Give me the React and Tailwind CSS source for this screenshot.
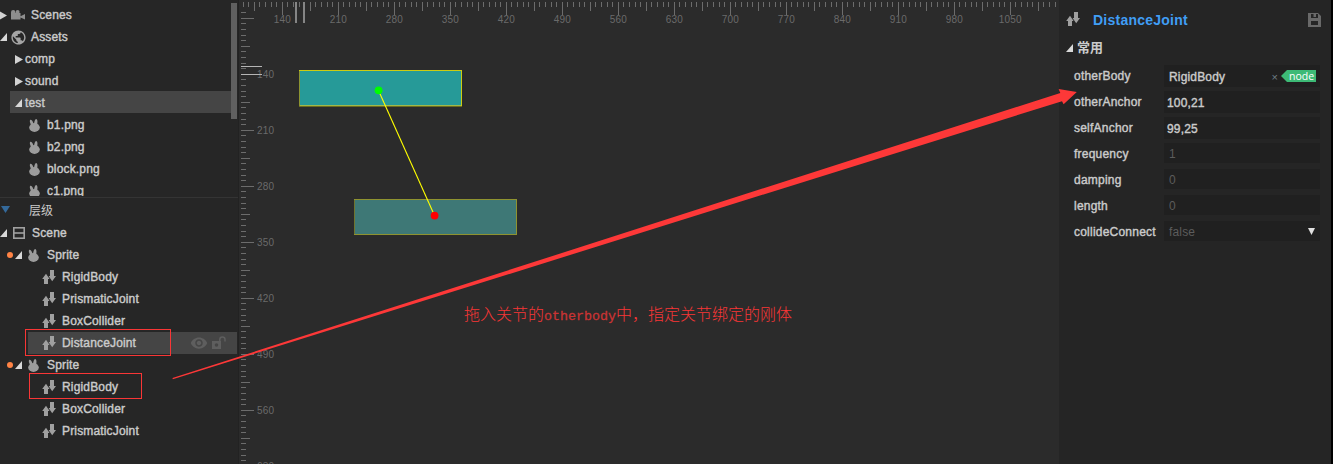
import React from "react";
import { MdPublic, MdVisibility } from "react-icons/md";

const Closed = ({ className = "" }) => (
  <svg className={`h-[9px] w-[8px] shrink-0 ${className}`} viewBox="0 0 8 9"><path d="M0 0L8 4.5L0 9Z" fill="#d2d2d2" /></svg>
);
const Open = ({ className = "" }) => (
  <svg className={`h-[8px] w-[7px] shrink-0 ${className}`} viewBox="0 0 7 8"><path d="M7 0V8H0Z" fill="#d8d8d8" /></svg>
);
const Camera = () => (
  <svg className="h-[10px] w-[14px] shrink-0" viewBox="0 0 14 10" fill="#8e8e8e">
    <circle cx="2.2" cy="2.2" r="2.2" /><circle cx="6.6" cy="2" r="2" />
    <path d="M0 3H9.5V6.2L14 4V9.5L9.5 7.6V9.6H0Z" />
  </svg>
);
const Rabbit = ({ className = "" }) => (
  <svg className={`h-[13px] w-[11px] shrink-0 ${className}`} viewBox="0 0 11 13" fill="#9c9c9c">
    <ellipse cx="5.5" cy="8.5" rx="5.3" ry="4.4" />
    <path d="M1.1 0.8C2.6 0.5 4.2 2.5 4.6 5.5L2.4 6.4C1 4.5 0.4 2.2 1.1 0.8Z" />
    <path d="M7.2 0.1C8.6 0.4 8.8 3.2 8 6L5 5.6C5 3.2 5.9 0.3 7.2 0.1Z" />
  </svg>
);
const Swap = ({ className = "" }) => (
  <svg className={`h-[14px] w-[14px] shrink-0 ${className}`} viewBox="0 0 14 14" fill="#a0a0a0">
    <path d="M4 3.8L7.6 9H6V14H2V9H0.2Z" />
    <path d="M8 0H12V6H14L10.2 11.2L6.6 6H8Z" />
  </svg>
);
const SceneIcon = () => (
  <svg className="h-[12px] w-[12px] shrink-0" viewBox="0 0 12 12" fill="none" stroke="#a0a0a0" strokeWidth="1.6">
    <rect x="0.8" y="0.8" width="10.4" height="10.4" /><path d="M1 6H11" />
  </svg>
);
const Unlock = () => (
  <svg className="h-[13px] w-[14px] shrink-0" viewBox="0 0 14 13">
    <path fillRule="evenodd" fill="#5e5e5e" d="M0 5H9V13H0ZM4.5 7.2A1.8 1.8 0 1 0 4.5 10.8A1.8 1.8 0 1 0 4.5 7.2Z" />
    <path d="M7.8 5V3.4A2.6 2.4 0 0 1 13 3.4V5.5" fill="none" stroke="#5e5e5e" strokeWidth="1.5" />
  </svg>
);
const Save = () => (
  <svg className="h-[14px] w-[13px] shrink-0" viewBox="0 0 13 14">
    <path fillRule="evenodd" fill="#696969" d="M0 0H10L13 3V14H0ZM3 1V5H10V1H8V4H5.5V1ZM3 8V12H10V8Z" />
  </svg>
);

const Dot = () => <span className="ml-[7px] mr-[2px] h-[6px] w-[6px] shrink-0 rounded-full bg-[#ff8345]" />;

const Row = ({ children }) => <div className="flex h-[22px] shrink-0 items-center">{children}</div>;

const Folder = ({ name }) => (
  <Row><Closed className="ml-[15px] mr-[2px]" /><span>{name}</span></Row>
);
const File = ({ name }) => (
  <Row><Rabbit className="ml-[29px] mr-[7px]" /><span>{name}</span></Row>
);
const Sprite = () => (
  <Row><Dot /><Open className="mr-[6px]" /><Rabbit className="mr-[8px]" /><span>Sprite</span></Row>
);
const Comp = ({ name }) => (
  <Row><Swap className="ml-[42px] mr-[6px]" /><span>{name}</span></Row>
);

const range = (a, b) => Array.from({ length: b - a + 1 }, (_, i) => a + i);
const tickLen = (k, sizes) => (k % 10 === 0 ? sizes[2] : k % 5 === 0 ? sizes[1] : sizes[0]);

// Stage coordinates start at the left edge of the stage panel.
const ORIGIN = 239;

function Stage() {
  return (
    <svg className="block h-[464px] w-[820px]" viewBox={`${ORIGIN} 0 820 464`}>
      <g fill="#6c6c6c" shapeRendering="crispEdges">
        {range(-7, 138).map((k) => (
          <rect key={k} x={Math.floor(282.3 + 5.6 * k)} y="2" width="1" height={tickLen(k, [5, 9, 13])} />
        ))}
        {range(-11, 69).map((k) => (
          <rect key={k} x="241" y={Math.floor(74.3 + 5.6 * k)} width={tickLen(k, [5, 9, 13])} height="1" />
        ))}
      </g>
      <g fill="#6a6a6a" fontFamily="Liberation Sans, Arial, sans-serif" fontSize="10" letterSpacing="0.2">
        {range(0, 13).map((i) => (
          <text key={i} x={282.3 + 56 * i} y="23" textAnchor="middle">{140 + 70 * i}</text>
        ))}
        {range(0, 7).map((i) => (
          <text key={i} x="257" y={78 + 56 * i}>{140 + 70 * i}</text>
        ))}
      </g>
      <g shapeRendering="crispEdges">
        <path d="M295 2h2v21h-2zM303 2h2v21h-2z" fill="#858585" />
        <path d="M241 66h21v1h-21zM241 74h21v1h-21z" fill="#b5b5b5" />
        <rect x="300" y="71" width="161" height="34" fill="#269a98" />
        <path d="M299 70h163v1h-163zM461 71h1v35h-1z" fill="#cccc12" />
        <path d="M299 71h1v35h-1z" fill="#8c9432" />
        <path d="M300 105h161v1h-161z" fill="#a0b84a" />
        <path d="M299 106h163v0.6h-163z" fill="#6c6c1c" />
        <rect x="355" y="200" width="161" height="34" fill="#3e7876" />
        <path d="M354 199h163v1h-163zM516 200h1v35h-1zM354 234h162v1h-162z" fill="#8f9330" />
        <path d="M354 200h1v34h-1z" fill="#6f7430" />
      </g>
      <path d="M378.5 90.5L434.5 215.5" stroke="#ffff00" strokeWidth="1.1" />
      <circle cx="378.6" cy="90.3" r="3.9" fill="#00ff00" />
      <circle cx="434.6" cy="215.6" r="3.9" fill="#ff0000" />
    </svg>
  );
}

const Field = ({ label, children, tall }) => (
  <div className="flex h-[26px] items-start">
    <span className="flex h-[22px] w-[90px] shrink-0 items-center tracking-[0.22px]">{label}</span>
    <div className={`flex w-[156px] items-center bg-[#202020] ${tall ? "h-[22px] pt-px" : "h-[20px] pt-[2px]"}`}>{children}</div>
  </div>
);

export default function App() {
  return (
    <div className="relative flex h-[464px] w-[1333px] overflow-hidden bg-[#2b2b2b] font-['Liberation_Sans','Noto_Sans_CJK_SC',sans-serif] text-[12px] leading-[22px] tracking-[0.16px] text-[#cbcbcb]">
      <aside className="flex w-[239px] shrink-0 flex-col border-r border-[#222222] bg-[#262626] [-webkit-text-stroke:0.4px_#cbcbcb]">
        <div className="flex h-[196px] shrink-0 overflow-hidden pt-[3px]">
          <div className="flex w-[231px] flex-col pt-px">
            <Row><Closed className="-ml-px mr-[4px]" /><Camera /><span className="ml-[6px]">Scenes</span></Row>
            <Row><Open className="mr-[3px]" /><MdPublic className="h-[17px] w-[17px] shrink-0 text-[#a5a5a5]" /><span className="ml-[4px]">Assets</span></Row>
            <Folder name="comp" />
            <Folder name="sound" />
            <div className="-mt-px mb-px ml-[10px] flex h-[22px] shrink-0 items-center bg-[#454545] pt-[2px]">
              <Open className="ml-[5px] mr-[3px]" /><span>test</span>
            </div>
            <File name="b1.png" />
            <File name="b2.png" />
            <File name="block.png" />
            <File name="c1.png" />
          </div>
          <div className="h-[116px] w-[6px] bg-[#606060]" />
        </div>
        <div className="mt-px flex h-[25px] shrink-0 items-center border-t border-[#343434]">
          <svg className="mb-[2px] ml-px h-[7px] w-[9px]" viewBox="0 0 9 7"><path d="M0 0H9L4.5 7Z" fill="#34699a" /></svg>
          <span className="ml-[19px] pt-[2px] tracking-normal [-webkit-text-stroke:0]">层级</span>
        </div>
        <Row><Open className="mr-[6px]" /><SceneIcon /><span className="ml-[7px]">Scene</span></Row>
        <Sprite />
        <Comp name="RigidBody" />
        <Comp name="PrismaticJoint" />
        <Comp name="BoxCollider" />
        <div className="ml-[28px] mr-px flex h-[22px] items-center bg-[#454545]">
          <Swap className="ml-[14px] mr-[6px]" /><span className="w-[128px]">DistanceJoint</span>
          <MdVisibility className="h-[18px] w-[18px] shrink-0 text-[#5e5e5e]" />
          <span className="ml-[4px] flex pb-[2px]"><Unlock /></span>
        </div>
        <Sprite />
        <Comp name="RigidBody" />
        <Comp name="BoxCollider" />
        <Comp name="PrismaticJoint" />
      </aside>

      <main className="w-[820px] shrink-0"><Stage /></main>

      <aside className="flex w-[274px] shrink-0 flex-col border-r-2 border-black bg-[#252525]">
        <div className="flex h-[38px] items-center pl-[7px] pr-[10px] pt-px">
          <Swap className="mb-[2px]" />
          <span className="ml-[13px] flex-1 text-[14px] font-bold tracking-[0.24px] text-[#409ef5]">DistanceJoint</span>
          <Save />
        </div>
        <div className="flex h-[27px] items-center pb-[7px] pl-[7px]">
          <Open className="mr-[4px]" /><span className="text-[13px] font-bold tracking-normal">常用</span>
        </div>
        <div className="flex flex-col pl-[15px] [-webkit-text-stroke:0.4px]">
          <Field label="otherBody" tall>
            <span className="ml-[5px] flex-1">RigidBody</span>
            <span className="mr-[3px] text-[11px] text-[#6f7d85] [-webkit-text-stroke:0]">×</span>
            <span className="mb-px mr-[4px] flex h-[12px] w-[35px] items-center bg-[#3dba76] pl-[8px] font-['Open_Sans',sans-serif] text-[10.5px] font-medium leading-[12px] tracking-normal text-white [-webkit-text-stroke:0] [clip-path:polygon(0_50%,6px_0,100%_0,100%_100%,6px_100%)]">node</span>
          </Field>
          <Field label="otherAnchor" tall><span className="ml-[3px]">100,21</span></Field>
          <Field label="selfAnchor" tall><span className="ml-[3px]">99,25</span></Field>
          <Field label="frequency"><span className="ml-[5px] text-[#5c5c5c] [-webkit-text-stroke:0]">1</span></Field>
          <Field label="damping"><span className="ml-[5px] text-[#5c5c5c] [-webkit-text-stroke:0]">0</span></Field>
          <Field label="length"><span className="ml-[5px] text-[#5c5c5c] [-webkit-text-stroke:0]">0</span></Field>
          <Field label="collideConnect">
            <span className="ml-[5px] flex-1 text-[#5c5c5c] [-webkit-text-stroke:0]">false</span>
            <svg className="mb-[2px] mr-[5px] h-[7px] w-[7px]" viewBox="0 0 7 7"><path d="M0 0H7L3.5 7Z" fill="#e0e0e0" /></svg>
          </Field>
        </div>
      </aside>

      <div className="absolute left-[25px] top-[329px] h-[27px] w-[146px] border border-[#f93636]" />
      <div className="absolute left-[29px] top-[373px] h-[26px] w-[113px] border border-[#f93636]" />
      <svg className="pointer-events-none absolute inset-0 h-[464px] w-[1333px]" viewBox="0 0 1333 464">
        <path d="M172.5 378L1060.3 93L1058.6 89L1076.8 92L1063.6 104.2L1062 101.2L172.8 379.2Z" fill="#fd3838" />
      </svg>
      <p className="absolute left-[464px] top-[302px] whitespace-nowrap font-['Noto_Sans_CJK_SC',sans-serif] text-[16px] font-light leading-[22px] tracking-normal text-[#f93636]">
        拖入关节的<span className="font-['Liberation_Mono',monospace] text-[13.33px] text-[#c93434] [-webkit-text-stroke:0.3px]">otherbody</span>中，指定关节绑定的刚体
      </p>
    </div>
  );
}
